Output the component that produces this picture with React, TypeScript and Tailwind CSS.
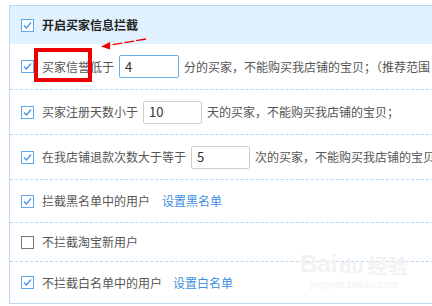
import React from "react";

const Check = ({ checked = true }: { checked?: boolean }) => (
  <svg width="13" height="13" viewBox="0 0 13 13" className="shrink-0">
    <rect x="0.5" y="0.5" width="12" height="12" fill="#fff" stroke={checked ? "#5ca9ee" : "#777"} strokeWidth="1" />
    {checked && <polyline points="3,6.5 5.5,9 10,3.5" fill="none" stroke="#3f95e6" strokeWidth="1.3" />}
  </svg>
);

const Input = ({ value, focus = false, w = "w-[60px]" }: { value: string; focus?: boolean; w?: string }) => (
  <div
    className={`${w} h-[23px] mx-[5px] flex items-center pl-[5px] rounded-[2px] border text-[13px] text-[#333] bg-white ${
      focus ? "border-[#66afe9]" : "border-[#cfcfcf]"
    }`}
  >
    {value}
  </div>
);

const divider = "border-b border-dashed border-[#b9d8f6]";

export default function App() {
  return (
    <div
      className="relative w-[432px] h-[306px] bg-white overflow-hidden text-[12px] text-[#555]"
      style={{ fontFamily: '"Noto Sans CJK SC", "Noto Sans", sans-serif' }}
    >
      <div className="ml-[9px] mt-[5px] w-[440px] border-l border-t border-b border-[#b9d8f6]">
        <div className="h-[38px] bg-[#e1f2fe] flex items-center pl-[11px] gap-[8px]">
          <Check />
          <span className="font-bold text-[#222] whitespace-nowrap">开启买家信息拦截</span>
        </div>
        <div className={`h-[46px] flex items-center pl-[11px] whitespace-nowrap ${divider}`}>
          <Check />
          <span className="ml-[8px]">买家信誉低于</span>
          <Input value="4" focus />
          <span>分的买家，不能购买我店铺的宝贝；（推荐范围</span>
        </div>
        <div className={`h-[45px] flex items-center pl-[11px] whitespace-nowrap ${divider}`}>
          <Check />
          <span className="ml-[8px]">买家注册天数小于</span>
          <Input value="10" w="w-[59px]" />
          <span>天的买家，不能购买我店铺的宝贝；</span>
        </div>
        <div className={`h-[45px] flex items-center pl-[11px] whitespace-nowrap ${divider}`}>
          <Check />
          <span className="ml-[8px]">在我店铺退款次数大于等于</span>
          <Input value="5" w="w-[59px]" />
          <span>次的买家，不能购买我店铺的宝贝</span>
        </div>
        <div className={`h-[43px] flex items-center pl-[11px] whitespace-nowrap ${divider}`}>
          <Check />
          <span className="ml-[8px]">拦截黑名单中的用户</span>
          <span className="ml-[12px] text-[#3d8fe0]">设置黑名单</span>
        </div>
        <div className={`h-[39px] flex items-center pl-[11px] whitespace-nowrap ${divider}`}>
          <Check checked={false} />
          <span className="ml-[8px]">不拦截淘宝新用户</span>
        </div>
        <div className="h-[41px] flex items-center pl-[11px] whitespace-nowrap">
          <Check />
          <span className="ml-[8px]">不拦截白名单中的用户</span>
          <span className="ml-[11px] text-[#3d8fe0]">设置白名单</span>
        </div>
      </div>

      {/* red highlight box */}
      <div className="absolute left-[34px] top-[48px] w-[58px] h-[34px] border-[4px] border-[#ee0000]" />

      {/* red arrow */}
      <svg className="absolute left-0 top-0" width="432" height="306" style={{ pointerEvents: "none" }}>
        <line x1="146" y1="39" x2="108" y2="45.5" stroke="#ee0000" strokeWidth="1.3" strokeDasharray="10 2" />
        <polygon points="101,46.5 110,42 110,49.5" fill="#ee0000" />
      </svg>

      {/* watermark */}
      <div className="absolute left-[300px] top-[252px] flex flex-col items-center text-[#f2f2f2] pointer-events-none">
        <div className="flex items-end leading-none">
          <span className="text-[24px] font-bold" style={{ fontFamily: '"Liberation Sans", sans-serif' }}>Bai</span>
          <span className="text-[20px] font-bold ml-[2px]" style={{ fontFamily: '"Liberation Sans", sans-serif' }}>du</span>
          <span className="text-[20px] font-bold ml-[4px]">经验</span>
        </div>
        <span className="text-[11px] leading-none mt-[3px]" style={{ fontFamily: '"Liberation Sans", sans-serif' }}>jingyan.baidu.com</span>
      </div>
    </div>
  );
}
